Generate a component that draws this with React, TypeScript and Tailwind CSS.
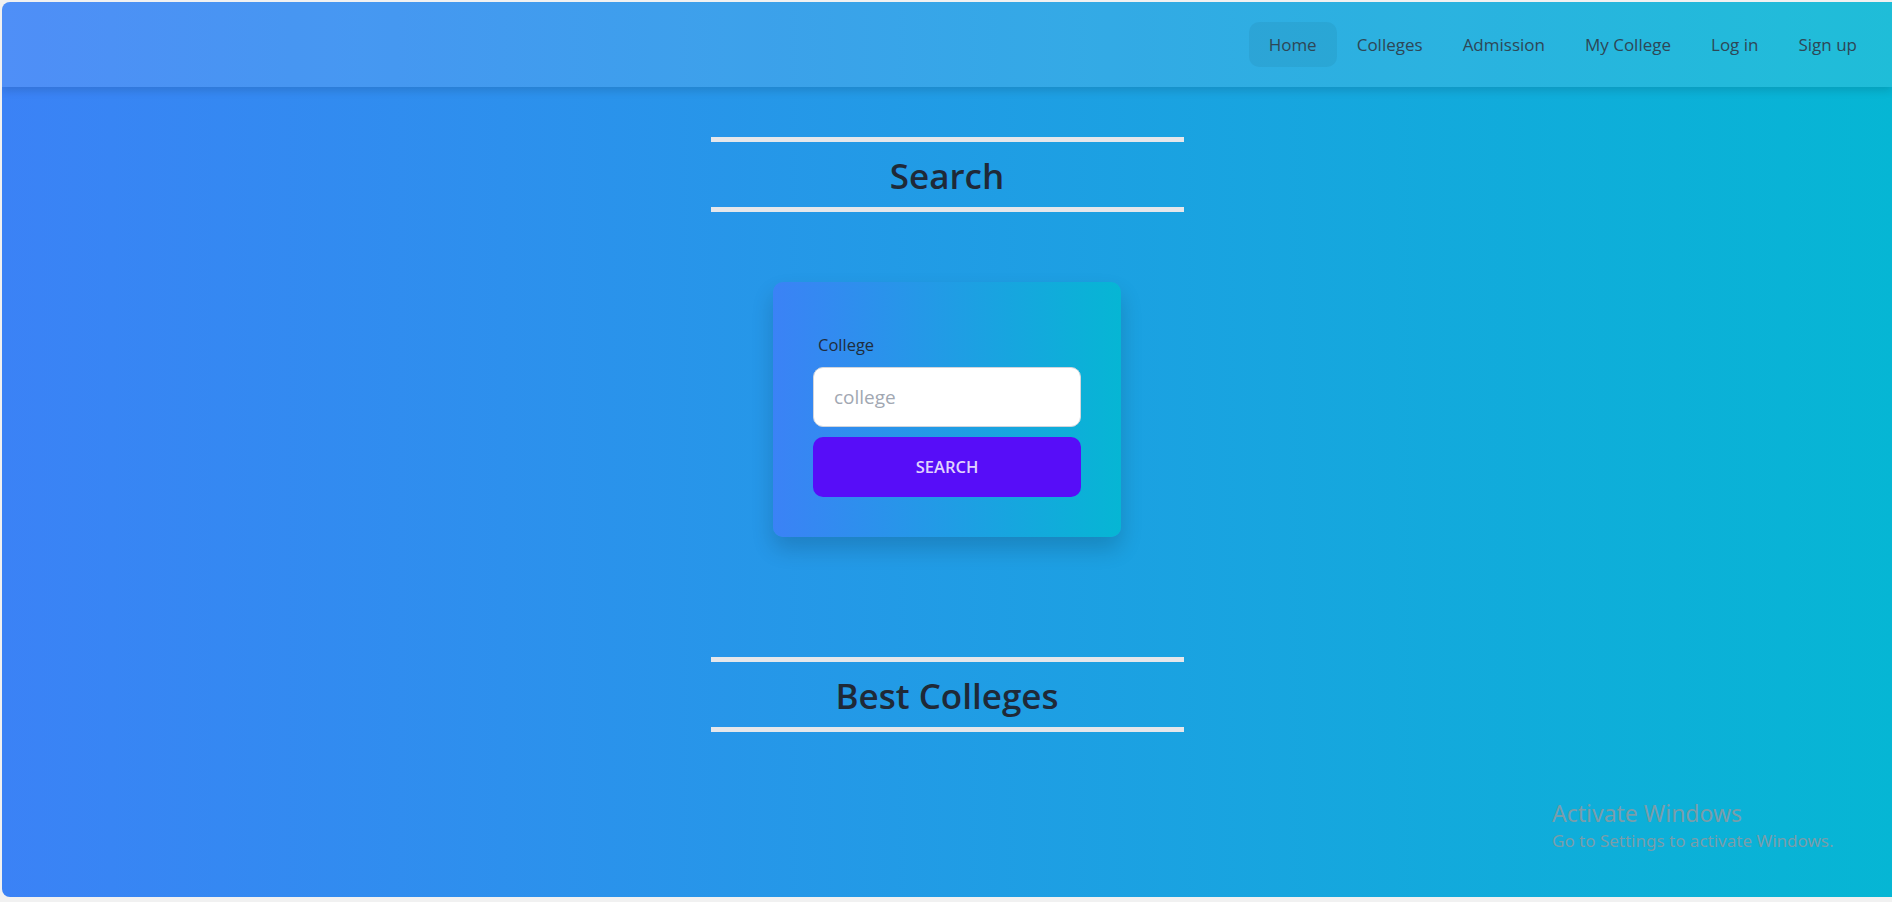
export default function App() {
  const links = ["Home", "Colleges", "Admission", "My College", "Log in", "Sign up"];

  return (
    <div className="min-h-screen bg-[#f1f1f1] pt-[2px] pl-[2px] font-['Open_Sans',sans-serif]">
      <div className="relative h-[895px] overflow-hidden rounded-l-[8px] bg-[linear-gradient(to_right,#3b82f6,#06b6d4)]">
        {/* Navbar */}
        <nav className="relative z-10 flex h-[85px] items-center justify-end bg-white/10 pr-[15px] shadow-[0_4px_8px_rgba(0,0,0,0.12)]">
          {links.map((l, i) => (
            <a
              key={l}
              className={
                "flex h-[45px] items-center rounded-[10px] px-[20px] text-[17px] text-[#2e4756] " +
                (i === 0 ? "bg-black/5" : "")
              }
            >
              {l}
            </a>
          ))}
        </nav>

        <main className="flex flex-col items-center">
          {/* Search heading */}
          <div className="mt-[50px] flex h-[75px] w-[473px] items-center justify-center border-y-[5px] border-gray-200 pt-[4px]">
            <h2 className="text-[35px] font-semibold text-[#1f2937]">Search</h2>
          </div>

          {/* Search card */}
          <div className="mt-[70px] w-[348px] rounded-[10px] bg-[linear-gradient(to_right,#3b82f6,#06b6d4)] p-[40px] shadow-[0_12px_22px_rgba(0,0,0,0.16)]">
            <label className="block px-[5px] py-[10px] text-[16.5px] leading-[25px] text-[#1f2d3d]">College</label>
            <input
              placeholder="college"
              className="h-[60px] w-full rounded-[10px] border border-gray-300 bg-white px-[20px] text-[19px] text-gray-700 outline-none placeholder:text-[#a1a7b2]"
            />
            <button className="mt-[10px] h-[60px] w-full rounded-[10px] bg-[#570df8] text-[16.5px] font-semibold uppercase text-[#e0d2fe]">
              Search
            </button>
          </div>

          {/* Best colleges heading */}
          <div className="mt-[120px] flex h-[75px] w-[473px] items-center justify-center border-y-[5px] border-gray-200 pt-[4px]">
            <h2 className="text-[35px] font-semibold text-[#1f2937]">Best Colleges</h2>
          </div>
        </main>

        {/* Windows watermark */}
        <div className="pointer-events-none absolute left-[1550px] top-[795px] text-[#7a9daa] font-['Noto_Sans',sans-serif]">
          <p className="text-[23px] leading-[32px]">Activate Windows</p>
          <p className="text-[17px] leading-[24px]">Go to Settings to activate Windows.</p>
        </div>
      </div>
    </div>
  );
}
